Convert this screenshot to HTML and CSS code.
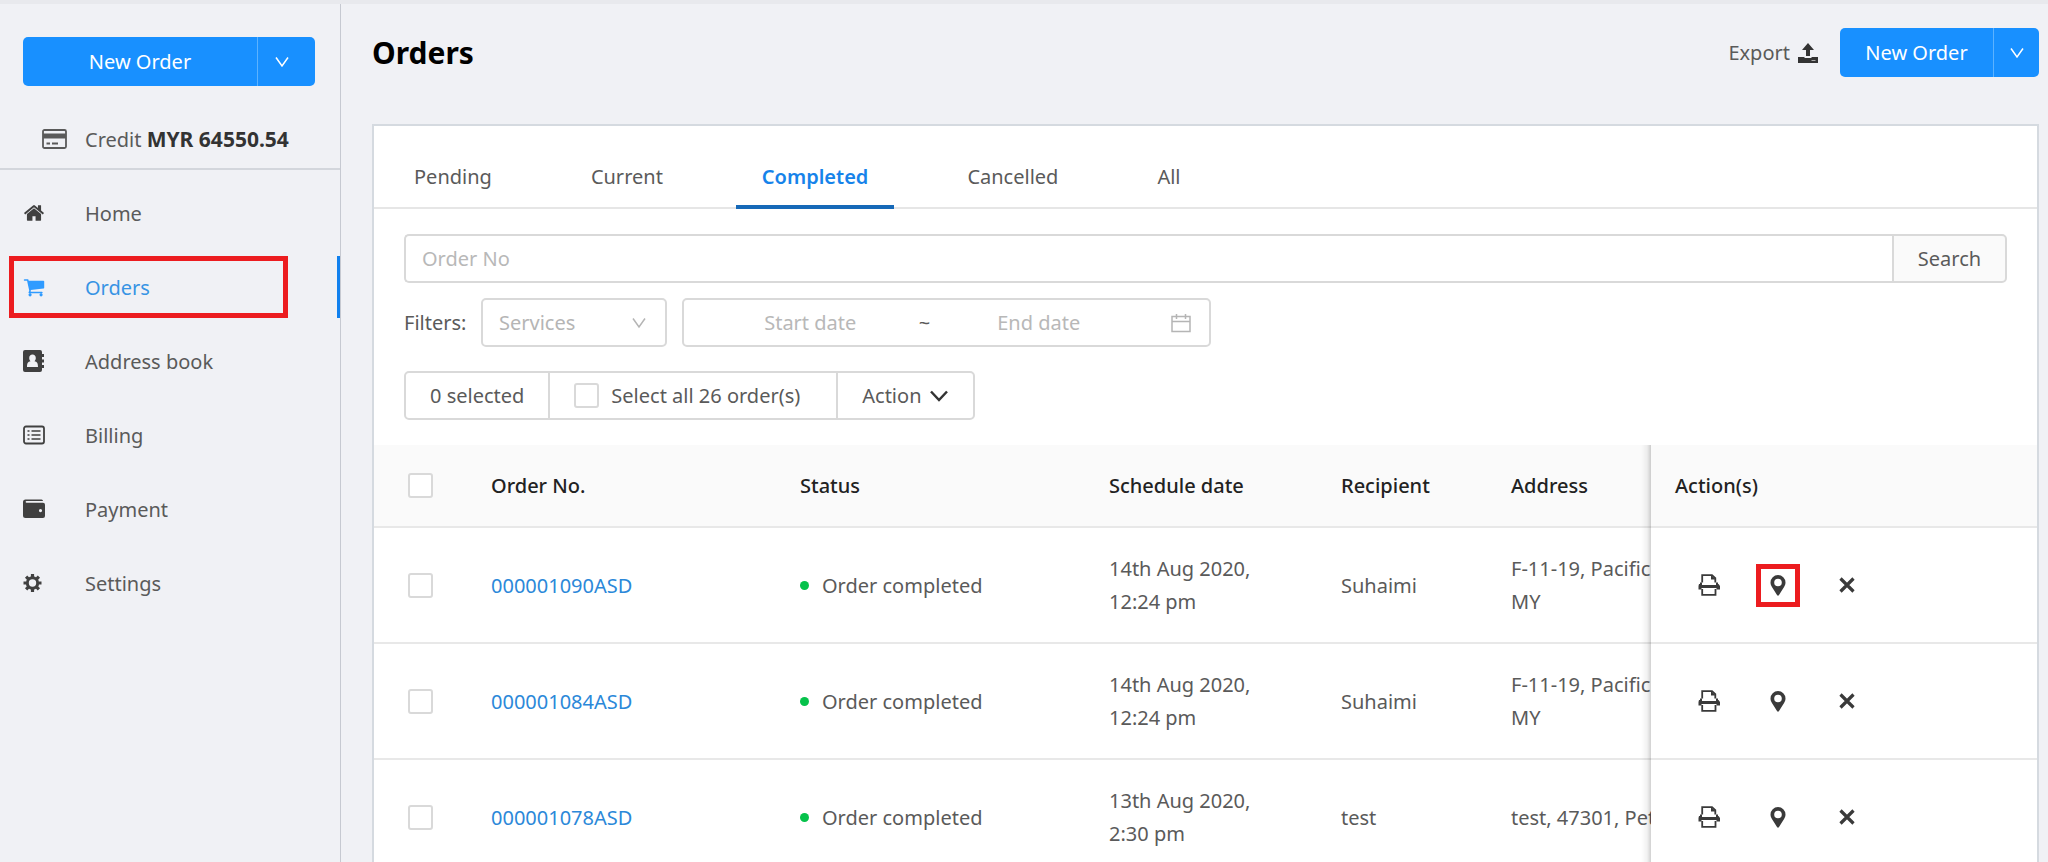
FILE: index.html
```html
<!DOCTYPE html>
<html lang="en">
<head>
<meta charset="utf-8">
<meta name="viewport" content="width=device-width, initial-scale=1">
<title>Orders</title>
<link rel="stylesheet" href="styles.css">
</head>
<body>
<svg class="sprite" aria-hidden="true">
  <symbol id="i-down" viewBox="0 0 16 16"><path d="M2 3.500 8 12 14 3.500" fill="none" stroke="currentColor" stroke-width="1.500"/></symbol>
  <symbol id="i-print" viewBox="0 0 22 22"><path d="M4.200 8.500V1.200H14l3.300 3V8.500" fill="none" stroke="currentColor" stroke-width="1.800"/><path d="M13 1v4.500h5z" fill="currentColor"/><path d="M1 10h3v1h14v-1h2.500L22 12v3.500h-3.500V14h-15v1.500H.5V12z" fill="currentColor"/><path d="M2 9.500h2M18 9.500h2" stroke="currentColor" stroke-width="2"/><path d="M4.200 15v5.800h13.300V15" fill="none" stroke="currentColor" stroke-width="1.800"/></symbol>
  <symbol id="i-pin" viewBox="0 0 16 22"><path fill="currentColor" fill-rule="evenodd" d="M8 1a7.500 7.500 0 0 1 7.500 7.500c0 2-.7 3-1.300 4.300L9 21q-1 1.500-2 0L1.800 12.800C1.200 11.500.5 10.500.5 8.500A7.500 7.500 0 0 1 8 1zm0 3.700a3.800 3.800 0 1 0 0 7.600 3.800 3.800 0 0 0 0-7.600z"/></symbol>
  <symbol id="i-x" viewBox="0 0 16 16"><path d="M1.500 1.500l13 13M14.500 1.500l-13 13" fill="none" stroke="currentColor" stroke-width="3.200"/></symbol>
</svg>
<div class="app">
  <aside class="sidebar">
    <div class="sidebar-top">
      <div class="split split-wide">
        <button type="button" class="split-main">New Order</button>
        <button type="button" class="split-more" aria-label="More order types"><svg class="icon-s"><use href="#i-down"/></svg></button>
      </div>
    </div>
    <div class="credit">
      <svg class="credit-icon" viewBox="0 0 25 20"><rect x="1" y="1" width="23" height="18" rx="1.500" fill="none" stroke="currentColor" stroke-width="1.800"/><path d="M1 4.500h23v5H1z" fill="currentColor"/><path d="M4.500 14.500h3.500M10 14.500h6" stroke="currentColor" stroke-width="1.800"/></svg>
      <span>Credit <strong>MYR 64550.54</strong></span>
    </div>
    <nav class="nav">
      <a href="#home"><svg class="nav-icon" viewBox="0 0 1792 1792"><path fill="currentColor" d="M1472 992v480q0 26-19 45t-45 19h-384v-384h-256v384h-384q-26 0-45-19t-19-45v-480q0-1 .5-3t.5-3l575-474 575 474q1 2 1 6zm223-69l-62 74q-8 9-21 11h-3q-13 0-21-7l-692-577-692 577q-12 8-24 7-13-2-21-11l-62-74q-8-10-7-23.500t11-21.500l719-599q32-26 76-26t76 26l244 204v-195q0-14 9-23t23-9h192q14 0 23 9t9 23v408l219 182q10 8 11 21.500t-7 23.500z"/></svg>Home</a>
      <a href="#orders" class="active marked" aria-current="page"><svg class="nav-icon" viewBox="0 0 1792 1792"><path fill="currentColor" d="M704 1536q0 52-38 90t-90 38-90-38-38-90 38-90 90-38 90 38 38 90zm896 0q0 52-38 90t-90 38-90-38-38-90 38-90 90-38 90 38 38 90zm128-1088v512q0 24-16.500 42.500t-40.500 21.500l-1044 122q13 60 13 70 0 16-24 64h920q26 0 45 19t19 45-19 45-45 19h-1024q-26 0-45-19t-19-45q0-11 8-31.500t16-36 21.500-40 15.500-29.500l-177-823h-204q-26 0-45-19t-19-45 19-45 45-19h256q16 0 28.500 6.500t19.500 15.500 13 24.500 8 26 5.500 29.500 4.500 26h1201q26 0 45 19t19 45z"/></svg>Orders</a>
      <a href="#address-book"><svg class="nav-icon" viewBox="0 0 22 22"><path fill="currentColor" fill-rule="evenodd" d="M2 0h15a2 2 0 0 1 2 2v2h2v3h-2v2.500h2v3h-2V15h2v3h-2v2a2 2 0 0 1-2 2H2a2 2 0 0 1-2-2V2a2 2 0 0 1 2-2zm7.500 4.500C7.500 4.500 6.200 6 6.200 8c0 1.200.5 2.400 1.300 3.200C5 11.500 4 13 4 17h11c0-4-1-5.500-3.500-5.800.8-.8 1.300-2 1.300-3.200 0-2-1.300-3.500-3.300-3.500z"/></svg>Address book</a>
      <a href="#billing"><svg class="nav-icon" viewBox="0 0 22 22"><rect x="1" y="2.500" width="20" height="17" rx="2" fill="none" stroke="currentColor" stroke-width="1.800"/><path d="M4.500 7h2M4.500 11h2M4.500 15h2M8.500 7h9M8.500 11h9M8.500 15h9" stroke="currentColor" stroke-width="1.700"/></svg>Billing</a>
      <a href="#payment"><svg class="nav-icon" viewBox="0 0 22 22"><path fill="currentColor" fill-rule="evenodd" d="M2.500 1.500h16a1.500 1.500 0 0 1 1.500 1.500H3.500a.7.700 0 0 0 0 1.700H20a2 2 0 0 1 2 2V18a2 2 0 0 1-2 2H2.500A2.500 2.500 0 0 1 0 17.500V4a2.500 2.500 0 0 1 2.500-2.500zM17.500 11a1.600 1.600 0 1 0 0 3.200 1.600 1.600 0 0 0 0-3.200z"/></svg>Payment</a>
      <a href="#settings"><svg class="nav-icon" viewBox="0 0 22 22"><circle cx="9.500" cy="11" r="5.200" fill="none" stroke="currentColor" stroke-width="3"/><path d="M9.500 2v3M9.500 17v3M.5 11h3M15.500 11h3M3.100 4.600l2.200 2.200M13.700 15.200l2.200 2.200M3.100 17.400l2.200-2.200M13.700 6.800l2.200-2.200" stroke="currentColor" stroke-width="3.200"/></svg>Settings</a>
    </nav>
  </aside>
  <main class="main">
    <header class="head">
      <h1>Orders</h1>
      <button type="button" class="export">Export
        <svg class="export-icon" viewBox="0 0 20 20"><path fill="currentColor" d="M10 0l6 7h-4v6H8V7H4zM0 14h6.500v1h7v-1H20v6H0z"/><path d="M13.500 17.500h4" stroke="#aaa" stroke-width="1"/></svg>
      </button>
      <div class="split">
        <button type="button" class="split-main">New Order</button>
        <button type="button" class="split-more" aria-label="More order types"><svg class="icon-s"><use href="#i-down"/></svg></button>
      </div>
    </header>
    <section class="card">
      <div class="tabs" role="tablist">
        <button type="button" role="tab">Pending</button>
        <button type="button" role="tab">Current</button>
        <button type="button" role="tab" class="active" aria-selected="true">Completed</button>
        <button type="button" role="tab">Cancelled</button>
        <button type="button" role="tab">All</button>
      </div>
      <div class="tools">
        <form class="search">
          <input type="text" placeholder="Order No" aria-label="Order No">
          <button type="button">Search</button>
        </form>
        <div class="filters">
          <label for="services">Filters:</label>
          <div class="select">
            <select id="services"><option>Services</option></select>
            <svg class="icon-s"><use href="#i-down"/></svg>
          </div>
          <div class="range">
            <input type="text" placeholder="Start date" aria-label="Start date">
            <span>~</span>
            <input type="text" placeholder="End date" aria-label="End date">
            <svg class="calendar" viewBox="0 0 20 20"><path d="M1 3.500h18v15H1zM1 8.500h18M5.500 1v5M14.500 1v5" fill="none" stroke="currentColor" stroke-width="1.500"/></svg>
          </div>
        </div>
        <div class="bulk">
          <span class="count">0 selected</span>
          <label class="all"><input type="checkbox" class="check">Select all 26 order(s)</label>
          <button type="button">Action <svg class="chevron" viewBox="0 0 20 14"><path d="M2 2.500 10 11l8-8.500" fill="none" stroke="currentColor" stroke-width="2.500"/></svg></button>
        </div>
      </div>
      <div class="table-wrap">
        <table>
          <colgroup><col class="c-check"><col class="c-order"><col class="c-status"><col class="c-date"><col class="c-name"><col><col class="c-act"></colgroup>
          <thead>
            <tr><th><input type="checkbox" class="check" aria-label="Select all rows"></th><th>Order No.</th><th>Status</th><th>Schedule date</th><th>Recipient</th><th>Address</th><th class="fixed">Action(s)</th></tr>
          </thead>
          <tbody>
            <tr><td><input type="checkbox" class="check" aria-label="Select 000001090ASD"></td><td><a href="#o1090">000001090ASD</a></td><td><span class="status">Order completed</span></td><td>14th Aug 2020,<br>12:24 pm</td><td>Suhaimi</td><td>F-11-19, Pacific<br>MY</td>
              <td class="fixed"><div class="acts"><button type="button" aria-label="Print"><svg class="i-print"><use href="#i-print"/></svg></button><button type="button" class="marked" aria-label="Track"><svg class="i-pin"><use href="#i-pin"/></svg></button><button type="button" aria-label="Cancel"><svg class="i-x"><use href="#i-x"/></svg></button></div></td></tr>
            <tr><td><input type="checkbox" class="check" aria-label="Select 000001084ASD"></td><td><a href="#o1084">000001084ASD</a></td><td><span class="status">Order completed</span></td><td>14th Aug 2020,<br>12:24 pm</td><td>Suhaimi</td><td>F-11-19, Pacific<br>MY</td>
              <td class="fixed"><div class="acts"><button type="button" aria-label="Print"><svg class="i-print"><use href="#i-print"/></svg></button><button type="button" aria-label="Track"><svg class="i-pin"><use href="#i-pin"/></svg></button><button type="button" aria-label="Cancel"><svg class="i-x"><use href="#i-x"/></svg></button></div></td></tr>
            <tr><td><input type="checkbox" class="check" aria-label="Select 000001078ASD"></td><td><a href="#o1078">000001078ASD</a></td><td><span class="status">Order completed</span></td><td>13th Aug 2020,<br>2:30 pm</td><td>test</td><td>test, 47301, Pet</td>
              <td class="fixed"><div class="acts"><button type="button" aria-label="Print"><svg class="i-print"><use href="#i-print"/></svg></button><button type="button" aria-label="Track"><svg class="i-pin"><use href="#i-pin"/></svg></button><button type="button" aria-label="Cancel"><svg class="i-x"><use href="#i-x"/></svg></button></div></td></tr>
          </tbody>
        </table>
      </div>
    </section>
  </main>
</div>
</body>
</html>
```
FILE: styles.css
```css
* { box-sizing: border-box; }
body {
  margin: 0;
  background: #f0f1f5;
  color: #5a5a5a;
  font: 20px/33px "Noto Sans", "Open Sans", sans-serif;
}
button, input, select { font: inherit; color: inherit; margin: 0; }
button { background: none; border: 0; padding: 0; cursor: pointer; white-space: nowrap; }
a { color: inherit; text-decoration: none; }
svg { display: block; flex: none; }
.sprite { position: absolute; width: 0; height: 0; }
.icon-s { width: 16px; height: 16px; }

.app {
  display: flex;
  height: 100vh;
  overflow: hidden;
  border-top: 4px solid #e8e9ed;
}

/* Sidebar */
.sidebar { flex: none; width: 341px; border-right: 1px solid #c6c9d1; }
.sidebar-top { padding: 33px 25px 0 23px; }
.split {
  display: flex;
  height: 49px;
  border-radius: 5px;
  overflow: hidden;
  background: #1890ff;
  color: #fff;
}
.split-main { flex: 1; padding: 0 25px; }
.split-more {
  width: 46px;
  display: flex;
  align-items: center;
  justify-content: center;
  border-left: 1px solid #5cb2ff;
}
.split-wide .split-more { width: 58px; padding-right: 10px; }
.credit {
  display: flex;
  align-items: center;
  gap: 18px;
  height: 84px;
  padding: 24px 0 0 42px;
  border-bottom: 2px solid #d3d6dc;
  white-space: nowrap;
}
.credit-icon { width: 25px; height: 20px; }
.credit strong { color: #333; font-size: 21px; font-weight: 700; }
.nav { display: flex; flex-direction: column; gap: 12px; padding-top: 12px; }
.nav a {
  position: relative;
  display: flex;
  align-items: center;
  gap: 40px;
  height: 62px;
  padding-left: 23px;
}
.nav-icon { width: 22px; height: 22px; color: #404040; }
.nav a.active { color: #3794e4; border-right: 3px solid #1080ee; }
.nav a.active .nav-icon { color: #2f9bff; }
.marked { position: relative; }
.marked::after { content: ""; position: absolute; border: 5px solid #ec1c1f; }
.nav .marked::after { inset: 0 49px 0 9px; }

/* Page header */
.main { flex: 1; min-width: 0; padding: 24px 9px 0 31px; }
.head { display: flex; align-items: center; height: 49px; }
.head .split { width: 199px; }
h1 { flex: 1; margin: 0; color: #000; font-size: 30px; line-height: 40px; font-weight: 700; }
.export { display: flex; align-items: center; gap: 8px; margin-right: 22px; }
.export-icon { width: 20px; height: 20px; color: #333; }

/* Card */
.card { margin-top: 47px; background: #fff; border: 2px solid #d5dae0; }
.tabs { display: flex; gap: 47px; height: 83px; padding-left: 14px; border-bottom: 2px solid #e6e6e6; }
.tabs button { height: 83px; padding: 17px 26px 0; }
.tabs .active { color: #1683ea; font-weight: 600; border-bottom: 4px solid #1669b8; padding-top: 21px; }
.tools { display: flex; flex-direction: column; align-items: flex-start; padding: 25px 30px; }
.search { display: flex; width: 100%; height: 49px; }
.search input, .search button, .select, .range, .bulk { border: 2px solid #d9d9d9; border-radius: 5px; background: #fff; }
.search input { flex: 1; min-width: 0; padding: 0 16px; border-radius: 5px 0 0 5px; border-right: 0; }
.search button { width: 115px; background: #fafafa; border-radius: 0 5px 5px 0; }
::placeholder { color: #b8b8b8; opacity: 1; }
.filters { display: flex; align-items: center; margin-top: 15px; }
.filters label { width: 77px; }
.select { display: flex; align-items: center; width: 186px; height: 49px; margin-right: 15px; padding-right: 18px; color: #b5b5b5; }
.select select { flex: 1; min-width: 0; height: 100%; padding: 0 0 0 16px; border: 0; background: none; appearance: none; }
.range { display: flex; align-items: center; width: 529px; height: 49px; padding: 0 18px; }
.range input { flex: 1; min-width: 0; width: 0; border: 0; padding: 0; text-align: center; background: none; }
.range span { width: 12px; text-align: center; }
.calendar { width: 20px; height: 20px; margin-left: 24px; color: #b5b5b5; }
.bulk { display: flex; height: 49px; margin-top: 24px; }
.bulk > * { display: flex; align-items: center; padding: 0 24px; }
.bulk > * + * { border-left: 2px solid #d9d9d9; }
.bulk .all { gap: 12px; padding-right: 36px; }
.bulk button { gap: 7px; }
.chevron { width: 20px; height: 14px; color: #333; }
.check {
  appearance: none;
  display: block;
  flex: none;
  width: 25px;
  height: 25px;
  border: 2px solid #d9d9d9;
  border-radius: 3px;
  background: #fff;
}

/* Table */
.table-wrap { overflow: hidden; }
table { width: 100%; min-width: 1900px; table-layout: fixed; border-collapse: separate; border-spacing: 0; }
.c-check { width: 93px; }
.c-order { width: 309px; }
.c-status { width: 309px; }
.c-date { width: 232px; }
.c-name { width: 170px; }
.c-act { width: 386px; }
th, td { padding: 0 0 0 24px; text-align: left; border-bottom: 2px solid #e8e8e8; white-space: nowrap; background: #fff; }
th:first-child, td:first-child { padding-left: 34px; }
th { height: 83px; color: #222; font-weight: 500; background: #fafafa; }
td { height: 116px; }
td a { color: #2b88d9; }
.status { display: flex; align-items: center; gap: 13px; }
.status::before { content: ""; width: 9px; height: 9px; border-radius: 50%; background: #06c24b; }
.fixed { position: sticky; right: 0; }
.fixed::before {
  content: "";
  position: absolute;
  top: 0;
  bottom: -2px;
  left: -10px;
  width: 10px;
  background: linear-gradient(to right, rgba(0, 0, 0, 0), rgba(0, 0, 0, 0.05) 60%, rgba(0, 0, 0, 0.18));
}
.acts { display: flex; align-items: center; padding-left: 12px; gap: 25px; color: #3a3a3a; }
.acts button { display: flex; align-items: center; justify-content: center; width: 44px; height: 43px; }
.acts .marked::after { inset: 0; }
.i-print { width: 22px; height: 22px; }
.i-pin { width: 16px; height: 22px; }
.i-x { width: 16px; height: 16px; }
```
